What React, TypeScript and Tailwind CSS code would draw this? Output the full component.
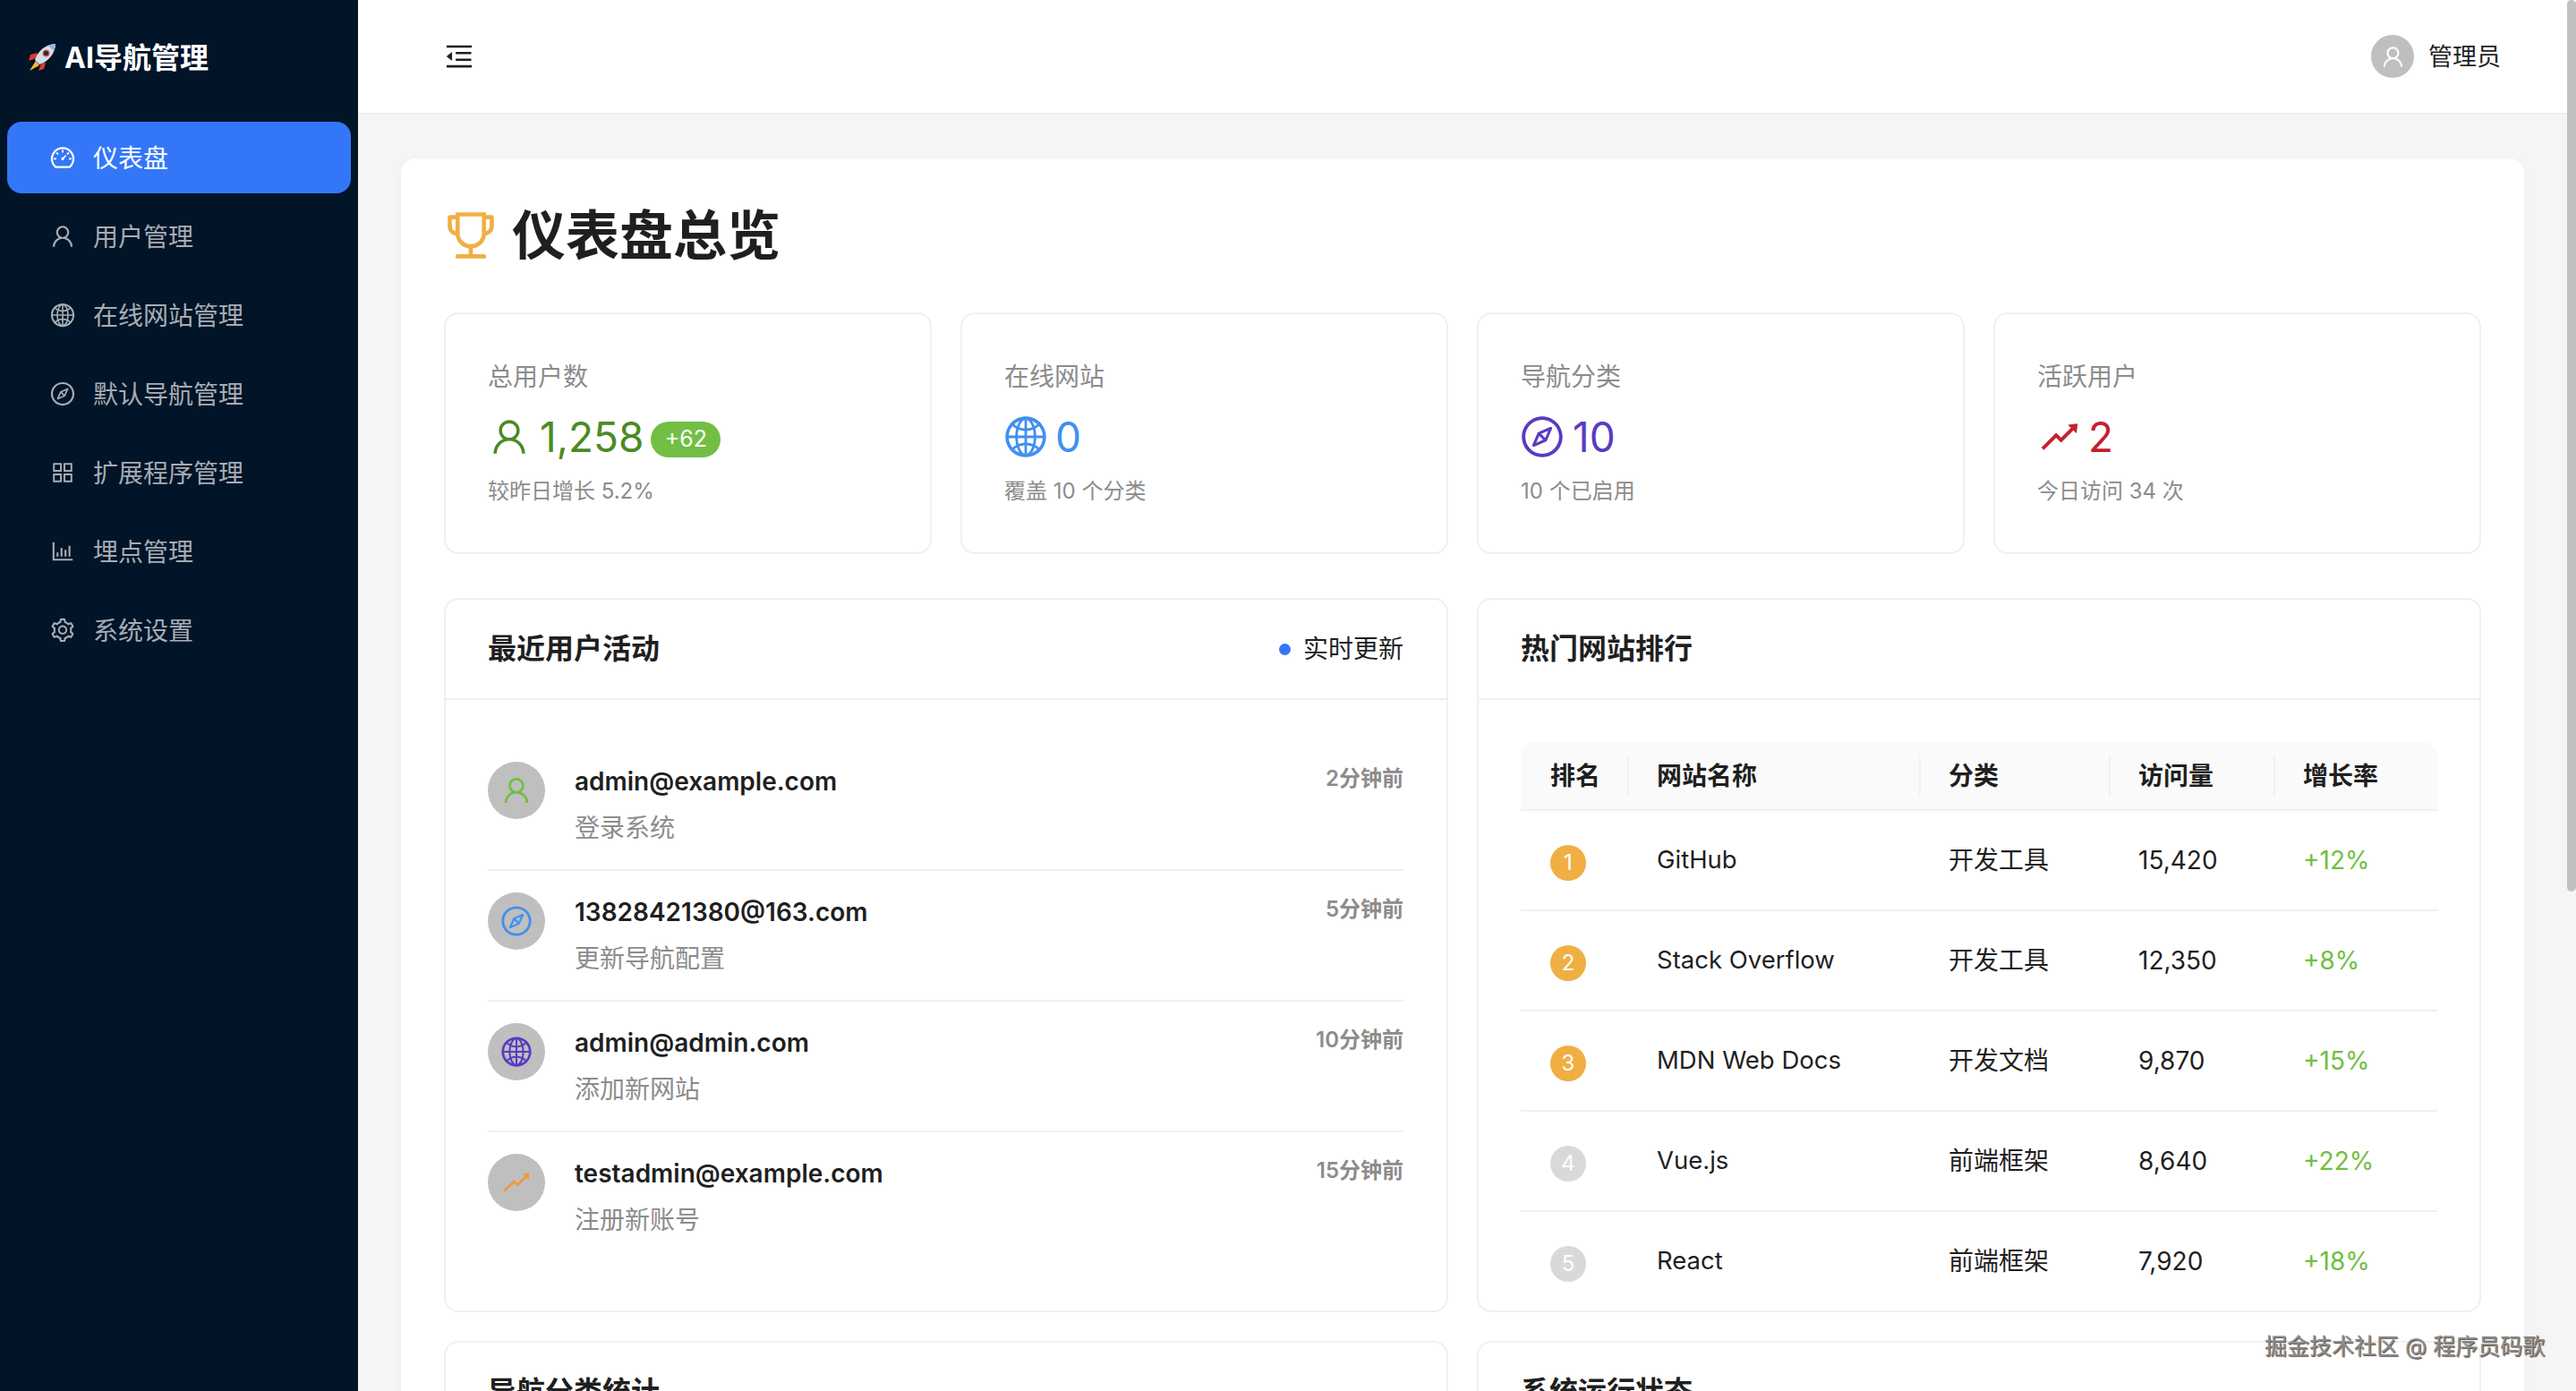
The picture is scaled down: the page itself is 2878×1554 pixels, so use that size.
import type { ReactNode } from 'react';
import {
  AiOutlineAppstore,
  AiOutlineBarChart,
  AiOutlineCompass,
  AiOutlineDashboard,
  AiOutlineGlobal,
  AiOutlineMenuFold,
  AiOutlineRise,
  AiOutlineSetting,
  AiOutlineTrophy,
  AiOutlineUser,
} from 'react-icons/ai';

const menu = [
  { label: '仪表盘', icon: <AiOutlineDashboard size={30} />, active: true },
  { label: '用户管理', icon: <AiOutlineUser size={30} /> },
  { label: '在线网站管理', icon: <AiOutlineGlobal size={30} /> },
  { label: '默认导航管理', icon: <AiOutlineCompass size={30} /> },
  { label: '扩展程序管理', icon: <AiOutlineAppstore size={30} /> },
  { label: '埋点管理', icon: <AiOutlineBarChart size={30} /> },
  { label: '系统设置', icon: <AiOutlineSetting size={30} /> },
];

const activities = [
  { email: 'admin@example.com', text: '登录系统', time: '2分钟前', icon: <AiOutlineUser size={36} className="text-[#6fbf40]" /> },
  { email: '13828421380@163.com', text: '更新导航配置', time: '5分钟前', icon: <AiOutlineCompass size={38} className="text-[#4090f0]" /> },
  { email: 'admin@admin.com', text: '添加新网站', time: '10分钟前', icon: <AiOutlineGlobal size={38} className="text-[#5a3bc2]" /> },
  { email: 'testadmin@example.com', text: '注册新账号', time: '15分钟前', icon: <AiOutlineRise size={36} className="text-[#f0983e]" /> },
];

const sites = [
  { rank: 1, name: 'GitHub', type: '开发工具', visits: '15,420', rate: '+12%' },
  { rank: 2, name: 'Stack Overflow', type: '开发工具', visits: '12,350', rate: '+8%' },
  { rank: 3, name: 'MDN Web Docs', type: '开发文档', visits: '9,870', rate: '+15%' },
  { rank: 4, name: 'Vue.js', type: '前端框架', visits: '8,640', rate: '+22%' },
  { rank: 5, name: 'React', type: '前端框架', visits: '7,920', rate: '+18%' },
];

function Rocket() {
  return (
    <svg viewBox="0 0 32 32" className="w-[32px] h-[32px] shrink-0">
      <path d="M9 20 L2 31 L13 25 Z" fill="#f7b731" />
      <path d="M11 11 L3 13 L1 20 L9 17 Z" fill="#e03a2f" />
      <path d="M20 22 L18 29 L12 31 L15 23 Z" fill="#e03a2f" />
      <path d="M31 1 C23 1 15 6 10 14 L8 19 L13 24 L18 22 C26 17 31 9 31 1 Z" fill="#d5e0ec" />
      <path d="M31 1 C28 1 25 2 23 3 L29 9 C30 7 31 4 31 1 Z" fill="#8db6e2" />
      <circle cx="20.5" cy="11.5" r="3.4" fill="#2b2d42" stroke="#e25c4e" strokeWidth="1.2" />
    </svg>
  );
}

function StatCard({ label, value, sub, color, icon, badge }: { label: string; value: string; sub: string; color: string; icon: ReactNode; badge?: string }) {
  return (
    <div className="h-[270px] rounded-[16px] border-2 border-[#f0f0f0] bg-white pl-[47px] pt-[50px]">
      <div className="text-[28px] leading-[40px] text-[#8c8c8c]">{label}</div>
      <div className={`mt-[17px] flex h-[60px] items-center ${color}`}>
        {icon}
        <span className="ml-[10px] text-[46px] leading-[60px]">{value}</span>
        {badge && (
          <span className="ml-[8px] mt-[5px] flex h-[40px] w-[78px] items-center justify-center rounded-[20px] bg-[#73bf45] text-[25px] text-white">{badge}</span>
        )}
      </div>
      <div className="mt-[13px] text-[24px] leading-[36px] text-[#8c8c8c]">{sub}</div>
    </div>
  );
}

function Panel({ title, extra, children }: { title: string; extra?: ReactNode; children: ReactNode }) {
  return (
    <div className="h-[798px] overflow-hidden rounded-[16px] border-2 border-[#f0f0f0] bg-white">
      <div className="flex h-[112px] items-center justify-between border-b-2 border-[#f0f0f0] pl-[47px] pr-[48px]">
        <span className="text-[32px] font-semibold text-[#1f1f1f]">{title}</span>
        {extra}
      </div>
      {children}
    </div>
  );
}

export default function App() {
  return (
    <div className="relative flex h-screen overflow-hidden bg-[#f5f5f5] font-[Inter,'Noto_Sans_CJK_SC',sans-serif] text-[#1f1f1f]">
      <aside className="w-[400px] shrink-0 bg-[#011428]">
        <div className="flex h-[128px] items-center gap-[9px] pl-[31px]">
          <Rocket />
          <span className="pt-[2px] text-[32px] font-bold text-white">AI导航管理</span>
        </div>
        <nav className="flex flex-col gap-[8px] pt-[8px] px-[8px]">
          {menu.map((item) => (
            <div
              key={item.label}
              className={`flex h-[80px] items-center gap-[19px] rounded-[16px] pl-[47px] text-[28px] ${item.active ? 'bg-[#3377f8] text-white' : 'text-[#a6adb4]'}`}
            >
              {item.icon}
              <span className="pt-[1px]">{item.label}</span>
            </div>
          ))}
        </nav>
      </aside>

      <div className="flex min-w-0 flex-1 flex-col">
        <header className="flex h-[128px] shrink-0 items-center justify-between border-b-2 border-[#eeeeee] bg-white pl-[95px] pr-[74px]">
          <AiOutlineMenuFold size={36} className="text-[#1f1f1f]" />
          <div className="flex items-center gap-[16px]">
            <div className="flex h-[48px] w-[48px] items-center justify-center rounded-full bg-[#bfbfbf] text-white">
              <AiOutlineUser size={29} />
            </div>
            <span className="pt-[2px] text-[27px]">管理员</span>
          </div>
        </header>

        <main className="flex-1 overflow-hidden px-[48px] pt-[49px]">
          <div className="rounded-[16px] bg-white px-[48px] pb-[48px] pt-[49px] shadow-[0_2px_8px_rgba(0,0,0,0.03)]">
            <h1 className="flex h-[74px] items-center text-[60px] font-bold leading-none text-[#1f1f1f]">
              <AiOutlineTrophy size={66} className="-ml-[3px] mr-[13px] text-[#f0af43]" />
              仪表盘总览
            </h1>

            <div className="mt-[49px] grid grid-cols-4 gap-[32px]">
              <StatCard label="总用户数" value="1,258" sub="较昨日增长 5.2%" color="text-[#4c8a24]" icon={<AiOutlineUser size={48} />} badge="+62" />
              <StatCard label="在线网站" value="0" sub="覆盖 10 个分类" color="text-[#4090f0]" icon={<AiOutlineGlobal size={52} className="-ml-[2px] -mr-[3px]" />} />
              <StatCard label="导航分类" value="10" sub="10 个已启用" color="text-[#5a3bc2]" icon={<AiOutlineCompass size={52} className="-ml-[2px] -mr-[2px]" />} />
              <StatCard label="活跃用户" value="2" sub="今日访问 34 次" color="text-[#c4202b]" icon={<AiOutlineRise size={50} className="-mr-[3px]" />} />
            </div>

            <div className="mt-[49px] grid grid-cols-2 gap-[32px]">
              <Panel
                title="最近用户活动"
                extra={
                  <div className="flex items-center gap-[14px]">
                    <span className="h-[13px] w-[13px] rounded-full bg-[#3377f8]" />
                    <span className="text-[28px]">实时更新</span>
                  </div>
                }
              >
                <div className="pl-[47px] pr-[48px] pt-[45px]">
                  {activities.map((a, i) => (
                    <div key={a.email} className={`flex h-[146px] pt-[24px] ${i < activities.length - 1 ? 'border-b-2 border-[#f0f0f0]' : ''}`}>
                      <div className="flex h-[64px] w-[64px] shrink-0 items-center justify-center rounded-full bg-[#bfbfbf]">{a.icon}</div>
                      <div className="ml-[33px] flex-1">
                        <div className="text-[28px] font-semibold leading-[44px] text-[#1f1f1f]">{a.email}</div>
                        <div className="mt-[8px] text-[28px] leading-[44px] text-[#8c8c8c]">{a.text}</div>
                      </div>
                      <div className="text-[24px] font-semibold leading-[38px] text-[#8c8c8c]">{a.time}</div>
                    </div>
                  ))}
                </div>
              </Panel>

              <Panel title="热门网站排行">
                <div className="px-[47px] pt-[47px]">
                  <table className="w-full table-fixed border-collapse text-left text-[28px]">
                    <colgroup>
                      <col className="w-[119px]" />
                      <col className="w-[326px]" />
                      <col className="w-[212px]" />
                      <col className="w-[184px]" />
                      <col />
                    </colgroup>
                    <thead>
                      <tr className="h-[76px] border-b-2 border-[#f0f0f0] bg-[#fafafa] text-[28px]">
                        <th className="rounded-tl-[16px] pl-[33px] font-semibold">排名</th>
                        {['网站名称', '分类', '访问量', '增长率'].map((h, i) => (
                          <th key={h} className={`relative pl-[33px] font-semibold before:absolute before:left-0 before:top-1/2 before:h-[43px] before:w-[2px] before:-translate-y-1/2 before:bg-[#f0f0f0] ${i === 3 ? 'rounded-tr-[16px]' : ''}`}>
                            {h}
                          </th>
                        ))}
                      </tr>
                    </thead>
                    <tbody>
                      {sites.map((s) => (
                        <tr key={s.rank} className="h-[112px] border-b-2 border-[#f0f0f0]">
                          <td className="pl-[33px]">
                            <span className={`mt-[6px] flex h-[40px] w-[40px] items-center justify-center rounded-full text-[24px] text-white ${s.rank <= 3 ? 'bg-[#f0af43]' : 'bg-[#d9d9d9]'}`}>{s.rank}</span>
                          </td>
                          <td className="pl-[33px] text-[27.5px]">{s.name}</td>
                          <td className="pl-[33px]">{s.type}</td>
                          <td className="pl-[33px]">{s.visits}</td>
                          <td className="pl-[33px] text-[#6fbf40]">{s.rate}</td>
                        </tr>
                      ))}
                    </tbody>
                  </table>
                </div>
              </Panel>

              <Panel title="导航分类统计"><div /></Panel>
              <Panel title="系统运行状态"><div /></Panel>
            </div>
          </div>
        </main>
      </div>

      <div className="w-[10px] shrink-0 bg-[#f5f5f5]">
        <div className="h-[996px] rounded-[5px] bg-[#c1c1c1]" />
      </div>

      <div className="absolute left-[2530px] top-[1486px] text-[25px] text-[#8e8e8e] [text-shadow:1px_1px_1px_#444]">掘金技术社区 @ 程序员码歌</div>
    </div>
  );
}
